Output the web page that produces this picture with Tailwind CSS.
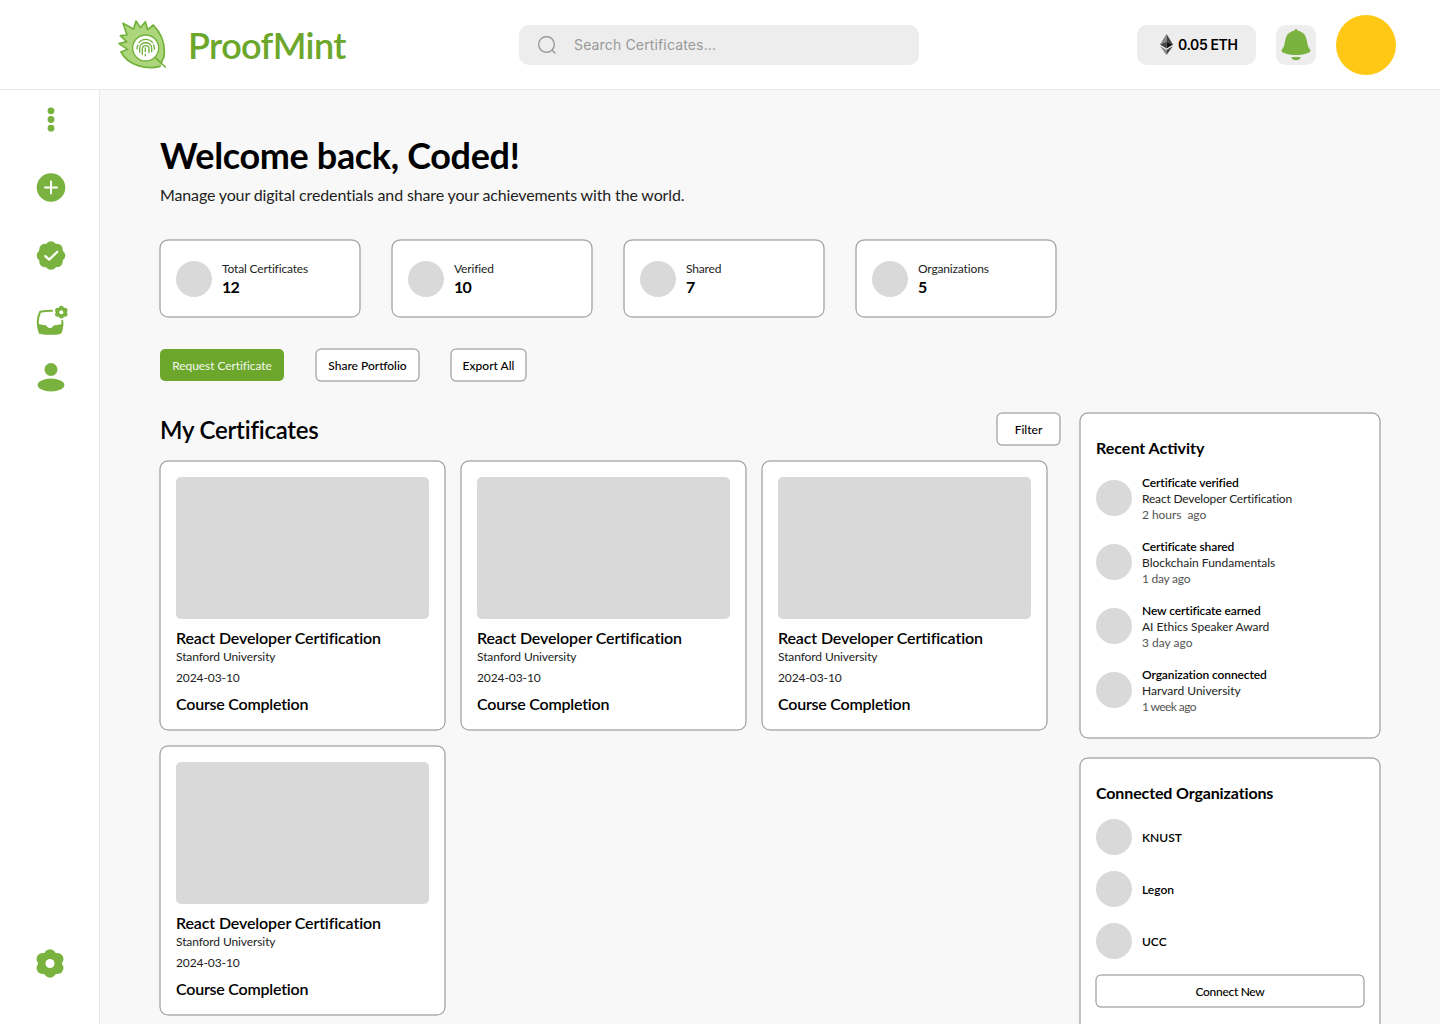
<!DOCTYPE html>
<html lang="en">
<head>
<meta charset="utf-8">
<title>ProofMint</title>
<script src="https://cdn.jsdelivr.net/npm/@tailwindcss/browser@4"></script>
</head>
<body class="h-screen overflow-hidden flex flex-col bg-[#f8f8f8] text-black font-['Lato','Noto_Sans',sans-serif]">

<header class="h-[90px] shrink-0 bg-white border-b border-[#e9e9e9] flex items-center pl-[115px] pr-11">
  <svg class="w-[53px] h-[52px] shrink-0 mb-0.5" viewBox="45 40 159 156" fill="none" stroke="#72b13a" stroke-linejoin="round" stroke-linecap="round">
    <path d="M69 56L101 72L108 49L121 69L136 50L143 75L160 61C182 84 198 115 193 156L183 185C140 198 82 183 62 141L82 133L57 116L79 111L61 93L82 90Z" fill="#acd57c" stroke="none"/>
    <path d="M69 56L101 73L108 49L121 69L136 51L143 75L160 61C184 86 197 118 192 157L183 174M180 185C140 196 85 183 63 142L83 134L57 117L80 111L61 93L81 91L69 56" stroke-width="5"/>
    <path d="M165 158L196 187" stroke-width="5"/>
    <circle cx="137" cy="130" r="39" fill="#fff" stroke-width="4"/>
    <g stroke-width="4">
      <path d="M117 114C126 101 148 101 158 114M111 133C110 127 112 124 114 121M163 134C164 128 162 124 161 121M119 143V130C120 109 154 109 155 130V141M127 149V131C128 120 146 120 147 131V144M136 130V141M136 149V153"/>
    </g>
  </svg>
  <span class="ml-[20px] w-[169px] text-[36px] leading-[44px] font-semibold tracking-[-0.6px] text-[#6ca72c] whitespace-nowrap">ProofMint</span>
  <div class="ml-[162px] w-[400px] h-10 rounded-[10px] bg-[#ededed] flex items-center pl-[18px] gap-[17px]">
    <svg class="w-5 h-5" viewBox="0 0 20 20" fill="none" stroke="#999" stroke-width="1.4" stroke-linecap="round"><rect x="1.8" y="1.8" width="15.4" height="15.4" rx="7.2"/><path d="M15.2 15.2L18 18"/></svg>
    <span class="text-sm font-normal tracking-[0.15px] text-[#999] font-['Inter',sans-serif]">Search Certificates...</span>
  </div>
  <div class="ml-auto flex items-center gap-5">
    <div class="w-[119px] h-10 rounded-[10px] bg-[#ededed] flex items-center pl-[23px] gap-[5px]">
      <svg class="w-[13px] h-[21px]" viewBox="0 0 13 21"><path d="M6.5 0L0 10.6L6.5 7.8Z" fill="#888"/><path d="M6.5 0L13 10.6L6.5 7.8Z" fill="#444"/><path d="M0 10.6L6.5 7.8V14.5Z" fill="#444"/><path d="M13 10.6L6.5 7.8V14.5Z" fill="#111"/><path d="M0 12L6.5 15.9V21Z" fill="#888"/><path d="M13 12L6.5 15.9V21Z" fill="#444"/></svg>
      <span class="text-sm font-semibold tracking-[-0.4px] whitespace-nowrap font-['Inter',sans-serif]">0.05 ETH</span>
    </div>
    <div class="w-10 h-10 rounded-[10px] bg-[#ededed] flex justify-center pt-1 pr-px">
      <svg class="w-[30px] h-8" viewBox="0 0 30 32" fill="#7ab23f"><path d="M15 .3C16.2.3 16.8 1 16.8 1.8C22.5 2.8 24.8 6.5 25.7 11C26.5 15.5 27 17.8 28.8 20.2C30 21.8 29.4 23 27.7 23.7C20 26.8 10 26.8 2.3 23.7C.6 23 0 21.8 1.2 20.2C3 17.8 3.5 15.5 4.3 11C5.2 6.5 7.5 2.8 13.2 1.8C13.2 1 13.8.3 15 .3Z"/><path d="M10.3 28H19.7C18.8 32.4 11.2 32.4 10.3 28Z"/></svg>
    </div>
    <div class="w-15 h-15 rounded-full bg-[#ffc815]"></div>
  </div>
</header>

<div class="flex flex-1 min-h-0">
  <nav class="w-[100px] shrink-0 bg-white border-r border-[#e9e9e9] flex flex-col items-center pt-[14px] pl-0.5 text-[#7ab23f]">
    <svg class="w-8 h-8 shrink-0" viewBox="0 0 32 32" fill="currentColor"><circle cx="16" cy="6.8" r="3.4"/><circle cx="16" cy="15.5" r="3.4"/><circle cx="16" cy="24.2" r="3.4"/></svg>
    <svg class="w-8 h-8 mt-9 shrink-0" viewBox="0 0 32 32"><circle cx="16" cy="15.5" r="14.3" fill="currentColor"/><path d="M16 9.5V21.5M10 15.5H22" stroke="#fff" stroke-width="2" stroke-linecap="round"/></svg>
    <svg class="w-8 h-8 mt-9 shrink-0" viewBox="0 0 32 32"><g fill="currentColor"><circle cx="16" cy="15.5" r="12.6"/><circle cx="16" cy="6.6" r="5.4"/><circle cx="22.3" cy="9.2" r="5.4"/><circle cx="24.9" cy="15.5" r="5.4"/><circle cx="22.3" cy="21.8" r="5.4"/><circle cx="16" cy="24.4" r="5.4"/><circle cx="9.7" cy="21.8" r="5.4"/><circle cx="7.1" cy="15.5" r="5.4"/><circle cx="9.7" cy="9.2" r="5.4"/></g><path d="M10.3 16.1L14.2 19.6L22.3 11.8" fill="none" stroke="#fff" stroke-width="2.2" stroke-linecap="round" stroke-linejoin="round"/></svg>
    <svg class="w-8 h-8 ml-[3px] mt-8 shrink-0" viewBox="0 0 32 32"><path d="M16 6.8C11 7 8 7.3 4.2 7.8C1.2 14 1.2 22 3.8 29" fill="none" stroke="currentColor" stroke-width="2" stroke-linecap="round"/><path d="M26.2 16.8Q26.6 19 26.2 22" fill="none" stroke="currentColor" stroke-width="2" stroke-linecap="round"/><path d="M2 20C5 20.5 7 21 9.5 21.2C11 21.3 11.5 24 14 24C16.5 24 17 21.3 18.5 21.2C21 21 24 20.5 27.2 19.5C27.2 23 26.8 26 25.8 28.5C25.2 30 23 30.8 14.5 30.8C6 30.8 3.8 30 3.1 28.5C2 26 1.8 23 2 20Z" fill="currentColor"/><g fill="currentColor"><circle cx="25.3" cy="8.2" r="5"/><circle cx="25.3" cy="4.3" r="2.5"/><circle cx="25.3" cy="12.1" r="2.5"/><circle cx="29" cy="6.2" r="2.5"/><circle cx="29" cy="10.2" r="2.5"/><circle cx="21.6" cy="6.2" r="2.5"/><circle cx="21.6" cy="10.2" r="2.5"/></g><circle cx="25.3" cy="8.2" r="2" fill="#fff"/></svg>
    <svg class="w-8 h-8 mt-[25px] shrink-0" viewBox="0 0 32 32" fill="currentColor"><circle cx="16" cy="8.5" r="6.5"/><ellipse cx="16" cy="24" rx="13.4" ry="6.5"/></svg>
    <svg class="w-8 h-8 mt-auto mb-[45px] mr-0.5 shrink-0" viewBox="0 0 32 32"><g fill="currentColor"><circle cx="16" cy="16.5" r="12"/><circle cx="16" cy="8.3" r="6"/><circle cx="16" cy="24.7" r="6"/><circle cx="23.5" cy="12" r="6"/><circle cx="23.5" cy="21" r="6"/><circle cx="8.5" cy="12" r="6"/><circle cx="8.5" cy="21" r="6"/></g><circle cx="16" cy="16.5" r="4.5" fill="#fff"/></svg>
  </nav>

  <main class="flex-1 min-w-0 pl-15 pr-15 pt-[43px]">
    <h1 class="text-[36px] leading-[44px] font-bold tracking-[-0.35px]">Welcome back, Coded!</h1>
    <p class="mt-1.5 text-base leading-6 text-[#222] tracking-[-0.14px]">Manage your digital credentials and share your achievements with the world.</p>

    <section id="stats" class="mt-[33px] flex gap-8"></section>

    <div class="mt-8 flex gap-8 text-xs">
      <button class="w-[124px] h-8 pt-px rounded-[5px] bg-[#6ca72c] text-[#f3f8ec] tracking-[-0.08px]">Request Certificate</button>
      <button class="w-[103px] h-8 pt-px rounded-[5px] bg-white font-medium shadow-[0_0_0_0.5px_#878787,inset_0_0_0_0.5px_#878787]">Share Portfolio</button>
      <button class="w-[75px] h-8 pt-px rounded-[5px] bg-white font-medium shadow-[0_0_0_0.5px_#878787,inset_0_0_0_0.5px_#878787]">Export All</button>
    </div>

    <div class="mt-8 flex gap-5 items-start">
      <section class="w-[900px]">
        <div class="flex justify-between items-center h-8">
          <h2 class="text-2xl leading-8 pt-0.5 font-semibold tracking-[-0.22px]">My Certificates</h2>
          <button class="w-[63px] h-8 pt-px rounded-[5px] bg-white text-xs font-medium shadow-[0_0_0_0.5px_#878787,inset_0_0_0_0.5px_#878787]">Filter</button>
        </div>
        <div id="certs" class="mt-4 grid grid-cols-[repeat(3,285px)] gap-4"></div>
      </section>

      <aside class="w-[300px] flex flex-col gap-5">
        <section class="h-[325px] pt-[25px] px-4 rounded-lg bg-white shadow-[0_0_0_0.5px_#878787,inset_0_0_0_0.5px_#878787]">
          <h3 class="leading-5 font-bold">Recent Activity</h3>
          <div id="activity" class="mt-4 flex flex-col gap-4"></div>
        </section>
        <section class="h-[300px] pt-[25px] px-4 rounded-lg bg-white shadow-[0_0_0_0.5px_#878787,inset_0_0_0_0.5px_#878787]">
          <h3 class="leading-5 font-bold tracking-[-0.13px]">Connected Organizations</h3>
          <div id="orgs" class="mt-4 flex flex-col gap-4"></div>
          <button class="mt-4 w-full h-8 pt-px rounded-[5px] bg-white text-xs font-medium tracking-[-0.3px] shadow-[0_0_0_0.5px_#878787,inset_0_0_0_0.5px_#878787]">Connect New</button>
        </section>
      </aside>
    </div>
  </main>
</div>

<script>
const fill = (id, items, render) => { document.getElementById(id).innerHTML = items.map(render).join(''); };
const dot = '<div class="w-9 h-9 rounded-full bg-[#d9d9d9] shrink-0"></div>';

fill('stats', [['Total Certificates', 12], ['Verified', 10], ['Shared', 7], ['Organizations', 5]], ([label, n]) => `
  <div class="w-[200px] h-[77px] px-4 flex items-center gap-2.5 rounded-lg bg-white shadow-[0_0_0_0.5px_#878787,inset_0_0_0_0.5px_#878787]">${dot}
    <div><div class="text-xs leading-4 text-[#222] tracking-[-0.15px]">${label}</div><div class="leading-5 font-bold tracking-[-0.8px]">${n}</div></div>
  </div>`);

fill('certs', Array(4).fill(['React Developer Certification', 'Stanford University', '2024-03-10', 'Course Completion']), ([title, org, date, kind]) => `
  <article class="h-[269px] p-4 rounded-lg bg-white shadow-[0_0_0_0.5px_#878787,inset_0_0_0_0.5px_#878787]">
    <div class="h-[142px] rounded-[5px] bg-[#d9d9d9]"></div>
    <h4 class="mt-[9px] leading-5 font-semibold tracking-[-0.13px]">${title}</h4>
    <p class="mt-px text-xs leading-4 text-[#222] tracking-[-0.1px]">${org}</p>
    <p class="mt-[5px] text-xs leading-4 text-[#222] tracking-[-0.1px]">${date}</p>
    <p class="mt-2 leading-5 font-semibold tracking-[-0.23px]">${kind}</p>
  </article>`);

fill('activity', [
  ['Certificate verified', 'React Developer Certification', '2 hours&nbsp; ago', 'tracking-[-0.18px]', 'tracking-[-0.05px]'],
  ['Certificate shared', 'Blockchain Fundamentals', '1 day ago', '', 'tracking-[-0.25px]'],
  ['New certificate earned', 'AI Ethics Speaker Award', '3 day ago', '', ''],
  ['Organization connected', 'Harvard University', '1 week ago', '', 'tracking-[-0.6px]']
], ([what, item, when, itemFit, whenFit]) => `
  <div class="h-12 flex items-center gap-2.5 text-xs leading-4">${dot}
    <div class="pt-0.5"><div class="font-semibold tracking-[-0.1px]">${what}</div><div class="text-[#222] ${itemFit}">${item}</div><div class="text-[#555] ${whenFit}">${when}</div></div>
  </div>`);

fill('orgs', ['KNUST', 'Legon', 'UCC'], name => `
  <div class="flex items-center gap-2.5">${dot}<span class="text-xs font-semibold pt-0.5">${name}</span></div>`);
</script>
</body>
</html>
